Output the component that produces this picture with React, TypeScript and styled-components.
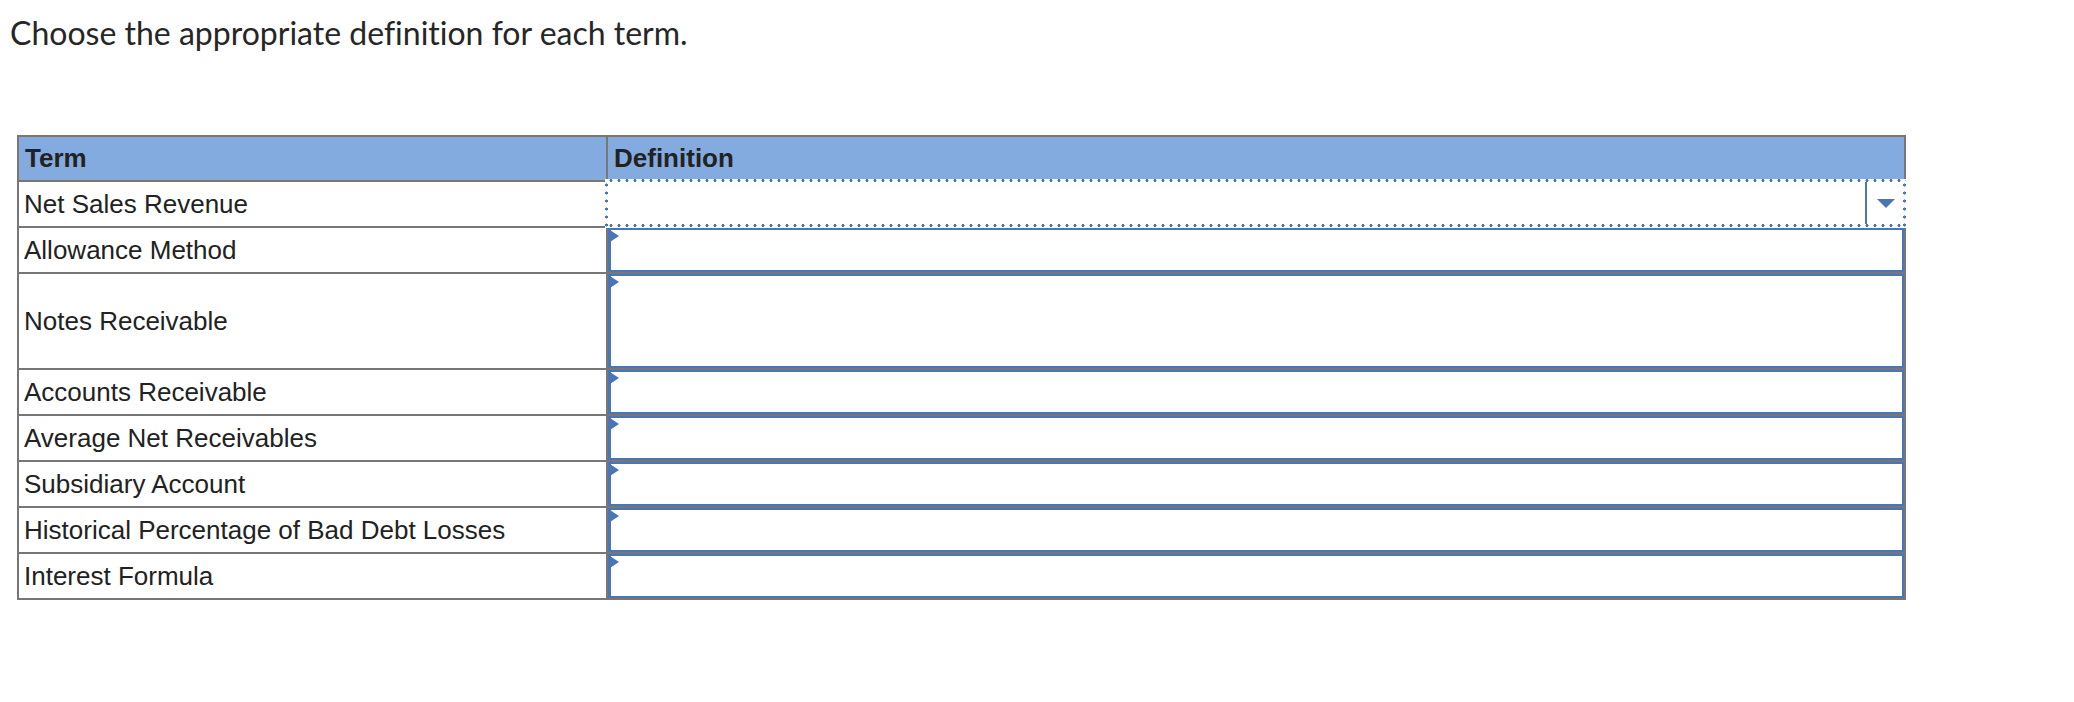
import React from "react";
import styled, { createGlobalStyle } from "styled-components";

const GlobalStyle = createGlobalStyle`
  html, body { margin: 0; padding: 0; background: #ffffff; }
  * { box-sizing: border-box; }
`;

const BLUE = "#4a76b8";
const GRAY = "#777777";

const Page = styled.div`
  display: flex;
  flex-direction: column;
  align-items: flex-start;
  padding: 14px 0 40px 0;
`;

const Title = styled.p`
  margin: 0 0 0 10px;
  font-family: "Lato", "Open Sans", sans-serif;
  font-size: 32px;
  line-height: 38px;
  font-variant-ligatures: none;
  color: #262626;
`;

const Grid = styled.div`
  display: grid;
  grid-template-columns: 589px 1298px;
  margin: 83px 0 0 17px;
  border-top: 2px solid ${GRAY};
  border-left: 2px solid ${GRAY};
  font-family: "Liberation Sans", Arial, sans-serif;
  font-size: 26px;
  color: #222222;
`;

const Cell = styled.div<{ $h: number }>`
  height: ${(p) => p.$h}px;
  border-right: 2px solid ${GRAY};
  border-bottom: 2px solid ${GRAY};
  display: flex;
  align-items: center;
  position: relative;
`;

const HeadCell = styled(Cell)`
  background: #84abdf;
  font-weight: 700;
  padding-left: 6px;
`;

const TermCell = styled(Cell)`
  padding-left: 5px;
  padding-top: 1px;
`;

const DefCell = styled(Cell)`
  align-items: stretch;
`;

const SelectBox = styled.div`
  flex: 1;
  position: relative;
  border: 2px solid ${BLUE};
  border-left-width: 3px;
  background: #ffffff;
`;

const Marker = styled.span`
  position: absolute;
  top: 0;
  left: -1px;
  width: 0;
  height: 0;
  border-top: 6.5px solid transparent;
  border-bottom: 6.5px solid transparent;
  border-left: 9px solid ${BLUE};
`;

const dot = (c: string) =>
  `radial-gradient(circle, ${c} 1.3px, rgba(255,255,255,0) 1.8px)`;

const FocusOutline = styled.span`
  position: absolute;
  top: -3px;
  left: -3px;
  right: -2px;
  bottom: -2px;
  background-color: #ffffff;
  background-image: ${dot(BLUE)}, ${dot(BLUE)}, ${dot(BLUE)}, ${dot(BLUE)};
  background-size: 8px 3px, 8px 5px, 3px 8px, 3px 8px;
  background-position: 2px 0, 2px 100%, 0 2px, 100% 2px;
  background-repeat: repeat-x, repeat-x, repeat-y, repeat-y;
`;

const FocusedSelect = styled.div`
  flex: 1;
  position: relative;
  display: flex;
  justify-content: flex-end;
  padding-bottom: 2px;
`;

const ArrowButton = styled.div`
  width: 39px;
  border-left: 2px solid ${BLUE};
  display: flex;
  align-items: center;
  justify-content: center;
  padding-left: 1px;
`;

const Arrow = styled.span`
  width: 0;
  height: 0;
  border-left: 9.5px solid transparent;
  border-right: 9.5px solid transparent;
  border-top: 9px solid ${BLUE};
`;

const rows: { term: string; h: number }[] = [
  { term: "Net Sales Revenue", h: 46 },
  { term: "Allowance Method", h: 46 },
  { term: "Notes Receivable", h: 96 },
  { term: "Accounts Receivable", h: 46 },
  { term: "Average Net Receivables", h: 46 },
  { term: "Subsidiary Account", h: 46 },
  { term: "Historical Percentage of Bad Debt Losses", h: 46 },
  { term: "Interest Formula", h: 46 },
];

export default function App() {
  return (
    <>
      <GlobalStyle />
      <Page>
        <Title>Choose the appropriate definition for each term.</Title>
        <Grid>
          <HeadCell $h={45}>Term</HeadCell>
          <HeadCell $h={45}>Definition</HeadCell>
          {rows.map((r, i) => (
            <React.Fragment key={r.term}>
              <TermCell $h={r.h}>{r.term}</TermCell>
              <DefCell $h={r.h}>
                {i === 0 ? (
                  <>
                    <FocusOutline />
                    <FocusedSelect>
                      <ArrowButton>
                        <Arrow />
                      </ArrowButton>
                    </FocusedSelect>
                  </>
                ) : (
                  <SelectBox>
                    <Marker />
                  </SelectBox>
                )}
              </DefCell>
            </React.Fragment>
          ))}
        </Grid>
      </Page>
    </>
  );
}
